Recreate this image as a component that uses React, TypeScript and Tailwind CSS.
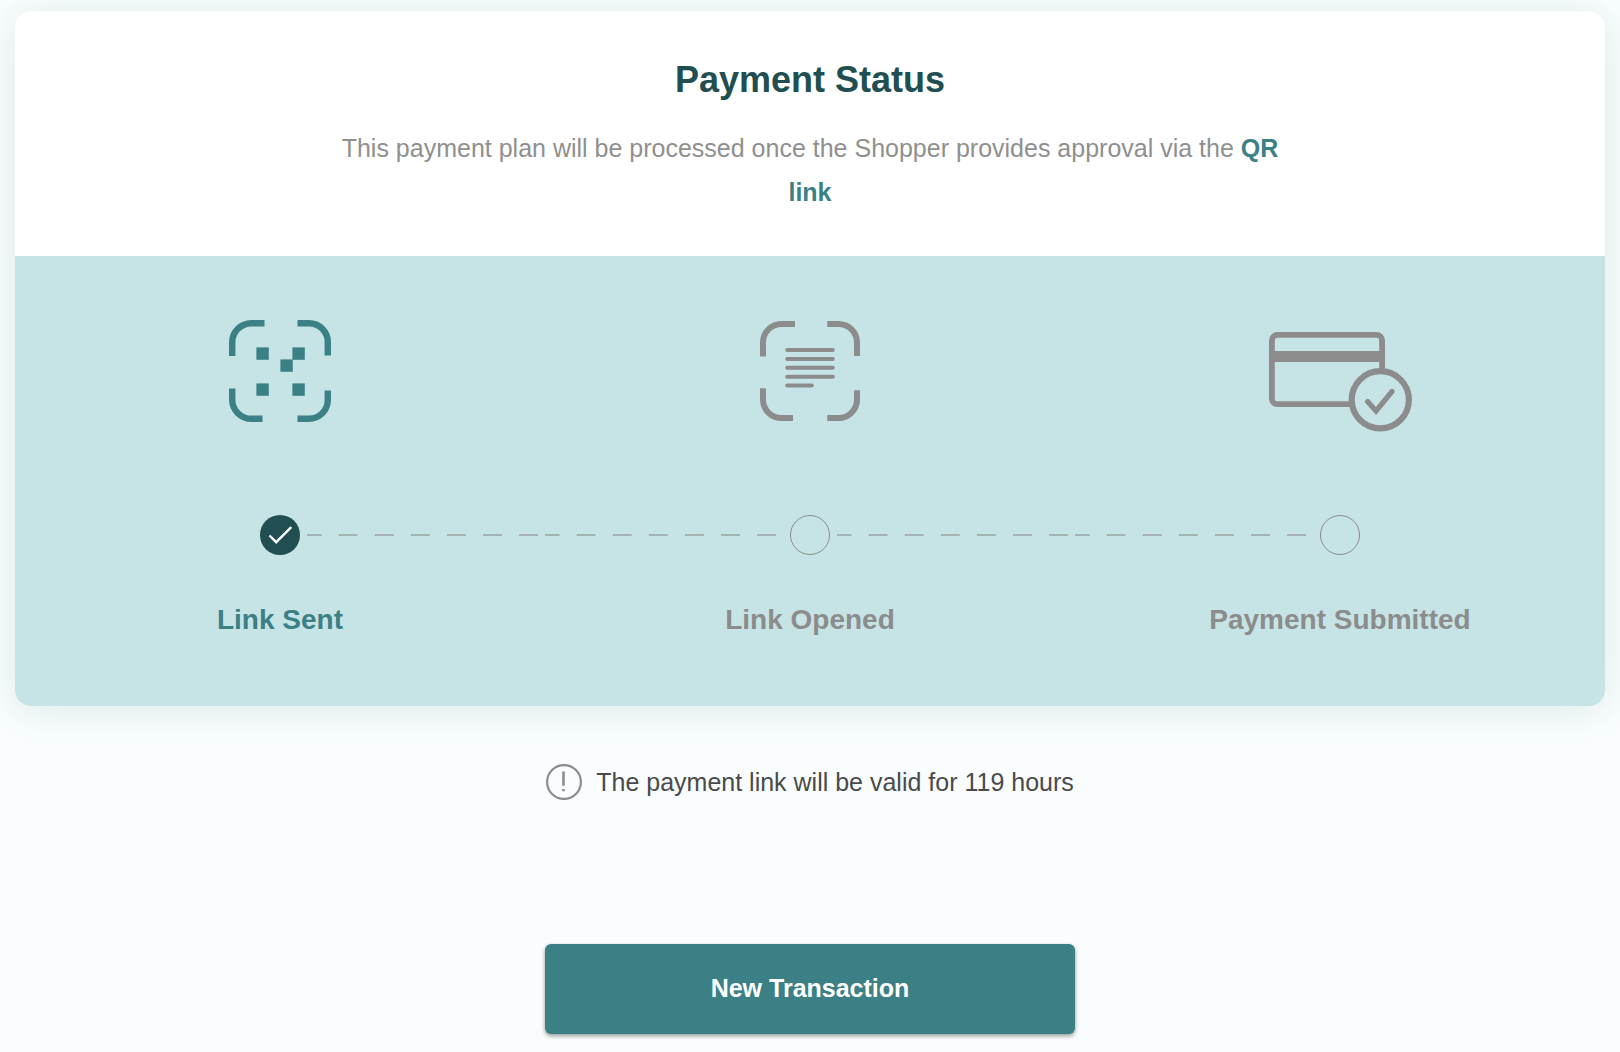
import type { ReactNode } from "react";

const LinkSentIcon = () => (
  <svg width="102" height="102" viewBox="0 0 102 102" fill="none" aria-hidden="true">
    <g stroke="currentColor" strokeWidth="6.4">
      <path d="M3.2 36V22.5A19.3 19.3 0 0 1 22.5 3.2H35.5" />
      <path d="M68.5 3.2H80A18.8 18.8 0 0 1 98.8 22V35.5" />
      <path d="M3.2 68.5V79.5A19.3 19.3 0 0 0 22.5 98.8H33.5" />
      <path d="M98.8 70.5V80A18.8 18.8 0 0 1 80 98.8H68.5" />
    </g>
    <g fill="currentColor">
      <rect x="27.4" y="27.4" width="12.4" height="12.4" />
      <rect x="63.4" y="27.4" width="12.4" height="12.4" />
      <rect x="51.4" y="39.4" width="12.4" height="12.4" />
      <rect x="27.4" y="63.4" width="12.4" height="12.4" />
      <rect x="63.4" y="63.4" width="12.4" height="12.4" />
    </g>
  </svg>
);

const LinkOpenedIcon = () => (
  <svg width="100" height="100" viewBox="0 0 100 100" fill="none" aria-hidden="true">
    <g stroke="currentColor" strokeWidth="6">
      <path d="M3 35.5V21.5A18.5 18.5 0 0 1 21.5 3H35" />
      <path d="M67.3 3H78.5A18.5 18.5 0 0 1 97 21.5V35" />
      <path d="M3 67.3V78.5A18.5 18.5 0 0 0 21.5 97H33" />
      <path d="M97 69.3V78.5A18.5 18.5 0 0 1 78.5 97H67.3" />
    </g>
    <g stroke="currentColor" strokeWidth="4" strokeLinecap="round">
      <path d="M27.2 29H72.8M27.2 38H72.8M27.2 46.8H72.8M27.2 55.7H72.8M27.2 64.5H51.8" />
    </g>
  </svg>
);

const PaymentSubmittedIcon = () => (
  <svg width="143" height="122" viewBox="0 -22 143 122" fill="none" aria-hidden="true">
    <g stroke="currentColor" strokeWidth="5.8">
      <path d="M81 72.2H8.4A5.5 5.5 0 0 1 2.9 66.7V8.4A5.5 5.5 0 0 1 8.4 2.9H107.6A5.5 5.5 0 0 1 113.1 8.4V38" />
      <circle cx="111.3" cy="67.8" r="28.6" strokeWidth="6.2" />
      <path
        d="M98.6 69.6L107 79L123 59.5"
        strokeWidth="5.2"
        strokeLinecap="round"
        strokeLinejoin="miter"
      />
    </g>
    <rect x="3" y="19" width="110" height="11" fill="currentColor" />
  </svg>
);

const steps: { label: string; icon: ReactNode; done: boolean }[] = [
  { label: "Link Sent", icon: <LinkSentIcon />, done: true },
  { label: "Link Opened", icon: <LinkOpenedIcon />, done: false },
  { label: "Payment Submitted", icon: <PaymentSubmittedIcon />, done: false },
];

const Connector = ({ visible }: { visible: boolean }) => (
  <svg className="h-[2px] min-w-0 flex-1" aria-hidden="true">
    {visible && (
      <line
        x1="0"
        y1="1"
        x2="100%"
        y2="1"
        stroke="#a3b3b3"
        strokeWidth="2"
        strokeDasharray="19 17.1"
        strokeDashoffset="4.5"
      />
    )}
  </svg>
);

const StepMarker = ({ done }: { done: boolean }) =>
  done ? (
    <span className="mx-[7px] flex size-10 shrink-0 items-center justify-center rounded-full bg-[#214e50]">
      <svg width="24" height="24" viewBox="0 0 24 24" fill="none" aria-hidden="true">
        <path d="M1.5 12.5L8.2 19.2L23.3 4.1" stroke="white" strokeWidth="2.4" />
      </svg>
    </span>
  ) : (
    <span className="mx-[7px] size-10 shrink-0 rounded-full border border-[#8c8c8c]" />
  );

const App = () => {
  return (
    <div className="min-h-screen bg-[#f9fdfe] px-[15px] pt-[11px] pb-[18px] font-['Liberation_Sans',Arial,sans-serif]">
      <main>
        <section className="overflow-hidden rounded-2xl bg-white shadow-[0_4px_40px_rgba(40,110,80,0.13)]">
          <header className="px-6 pt-[49px] pb-[42px] text-center">
            <h1 className="text-4xl leading-10 font-bold text-[#214e50]">Payment Status</h1>
            <p className="mx-auto mt-[26px] max-w-[960px] text-[25px] leading-[44px] text-[#8f8f8f]">
              This payment plan will be processed once the Shopper provides approval via the{" "}
              <a href="#qr-link" className="font-bold text-[#3b8084]">
                QR link
              </a>
            </p>
          </header>

          <ol className="grid grid-cols-3 bg-[#c6e4e5] pt-16 pb-[66px]">
            {steps.map((step) => (
              <li
                key={step.label}
                className={`flex flex-col items-center ${step.done ? "text-[#3b8084]" : "text-[#8c8c8c]"}`}
              >
                <div className="flex h-[102px] items-center justify-center">
                  {step.icon}
                </div>
                <div className="mt-[93px] flex w-full items-center">
                  <Connector visible={step !== steps[0]} />
                  <StepMarker done={step.done} />
                  <Connector visible={step !== steps[steps.length - 1]} />
                </div>
                <p className="mt-[45px] text-[28px] leading-10 font-bold">{step.label}</p>
              </li>
            ))}
          </ol>
        </section>

        <div className="mt-[58px] flex items-center justify-center gap-[14px]">
          <svg width="36" height="36" viewBox="0 0 36 36" fill="none" aria-hidden="true">
            <circle cx="18" cy="18" r="16.9" stroke="#8c8c8c" strokeWidth="2.2" />
            <path d="M17.5 7.5V21.8M17.5 25V27.2" stroke="#8c8c8c" strokeWidth="2.6" />
          </svg>
          <p className="text-[25px] leading-9 text-[#4a4a4a]">
            The payment link will be valid for 119 hours
          </p>
        </div>

        <button
          type="button"
          className="mx-auto mt-36 block h-[90px] w-1/3 rounded-md bg-[#3b8084] text-[25px] font-bold text-white shadow-[0_2px_4px_rgba(0,0,0,0.4)]"
        >
          New Transaction
        </button>
      </main>
    </div>
  );
};

export default App;
